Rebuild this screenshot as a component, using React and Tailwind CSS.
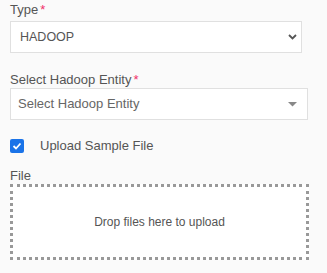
export default function App() {
  return (
    <div className="min-h-[273px] w-[327px] bg-[#fafafa] pl-[10px] pt-[2px] text-[#555]" style={{ fontFamily: '"Liberation Sans", Arial, sans-serif' }}>
      <div className="flex h-[16px] items-center text-[13px] leading-[16px]">
        Type<span className="ml-[2px] text-[#f0306a]">*</span>
      </div>
      <div className="mt-[3px] flex h-[32px] w-[292px] items-center justify-between border border-[#e0e0e0] bg-white pl-[9px] pr-[4px] text-[12.5px] text-[#555]">
        <span>HADOOP</span>
        <svg width="9" height="6" viewBox="0 0 9 6" className="mr-[0px]">
          <path d="M1 1 L4.5 4.5 L8 1" fill="none" stroke="#555" strokeWidth="1.8" />
        </svg>
      </div>
      <div className="mt-[19px] flex h-[16px] items-center text-[13px] leading-[16px]">
        Select Hadoop Entity<span className="ml-[2px] text-[#f0306a]">*</span>
      </div>
      <div className="flex h-[32px] w-[298px] items-center justify-between border border-[#e0e0e0] bg-white pl-[7px] pr-[10px] text-[13px] text-[#666]">
        <span>Select Hadoop Entity</span>
        <svg width="9" height="5" viewBox="0 0 9 5">
          <path d="M0 0 L9 0 L4.5 4.5 Z" fill="#888" />
        </svg>
      </div>
      <div className="mt-[19px] flex h-[14px] items-center">
        <div className="flex h-[14px] w-[14px] items-center justify-center rounded-[2px] bg-[#1a73e8]">
          <svg width="10" height="10" viewBox="0 0 10 10">
            <path d="M1.5 5 L4 7.5 L8.5 2.5" fill="none" stroke="white" strokeWidth="1.8" />
          </svg>
        </div>
        <span className="ml-[16px] text-[13px] text-[#555]">Upload Sample File</span>
      </div>
      <div className="mt-[15px] h-[16px] text-[13px] leading-[16px]">File</div>
      <div className="flex h-[76px] w-[299px] items-center justify-center border-[3px] border-dotted border-[#999] bg-white text-[12px] text-[#555]">
        Drop files here to upload
      </div>
    </div>
  );
}
